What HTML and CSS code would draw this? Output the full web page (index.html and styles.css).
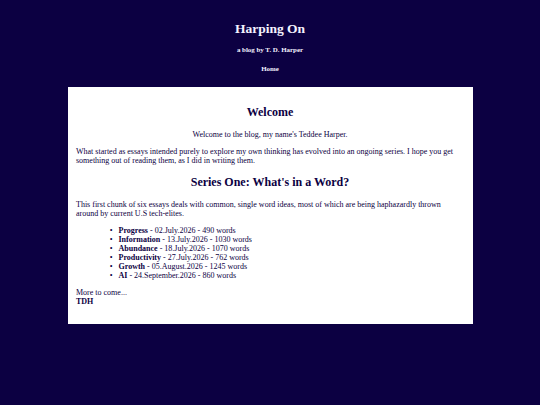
FILE: index.html
```html
<!DOCTYPE html>
<html lang="en">
<head>
<meta charset="utf-8">
<title>Harping On</title>
<link rel="stylesheet" href="styles.css">
</head>
<body>
<header class="site-header">
  <h1 class="site-title">Harping On</h1>
  <h5 class="site-sub">a blog by T. D. Harper</h5>
  <nav class="site-nav"><a href="#" class="nav-link">Home</a></nav>
</header>
<main class="card">
  <h2 class="heading">Welcome</h2>
  <p class="center">Welcome to the blog, my name's Teddee Harper.</p>
  <p>What started as essays intended purely to explore my own thinking has evolved into an ongoing series. I hope you get something out of reading them, as I did in writing them.</p>
  <h2 class="heading">Series One: What's in a Word?</h2>
  <p>This first chunk of six essays deals with common, single word ideas, most of which are being haphazardly thrown around by current U.S tech-elites.</p>
  <ul class="essays">
    <li><b>Progress</b> - 02.July.2026 - 490 words</li>
    <li><b>Information</b> - 13.July.2026 - 1030 words</li>
    <li><b>Abundance</b> - 18.July.2026 - 1070 words</li>
    <li><b>Productivity</b> - 27.July.2026 - 762 words</li>
    <li><b>Growth</b> - 05.August.2026 - 1245 words</li>
    <li><b>AI</b> - 24.September.2026 - 860 words</li>
  </ul>
  <p class="sign">More to come...<br><b>TDH</b></p>
</main>
</body>
</html>
```
FILE: styles.css
```css
html, body {
  margin: 0;
  padding: 0;
}
body {
  background: #0c0042;
  color: #0c0042;
  font-family: "Liberation Serif", "Times New Roman", serif;
  font-size: 8px;
  padding-bottom: 20px;
}
.site-header {
  text-align: center;
  color: #f4f2ff;
  padding-top: 21px;
}
.site-title {
  font-size: 13.5px;
  margin: 0;
  line-height: 16px;
}
.site-sub {
  font-size: 6.9px;
  margin: 9px 0 0;
  line-height: 8px;
}
.site-nav {
  font-size: 6.9px;
  font-weight: bold;
  margin-top: 11px;
  line-height: 8px;
}
.nav-link {
  color: #f4f2ff;
  text-decoration: none;
}
.card {
  display: block;
  width: 75%;
  margin: 14px auto 0;
  background: #ffffff;
  padding: 8px 8.5px 10px;
  box-sizing: border-box;
  overflow: hidden;
}
.heading {
  font-size: 12px;
  text-align: center;
  margin: 10px 0;
}
.card p {
  margin: 8px 0;
}
.center {
  text-align: center;
}
.essays {
  margin: 8px 0;
  padding-left: 42.5px;
  list-style: none;
}
.essays li::before {
  content: "\2022";
  display: inline-block;
  width: 8.7px;
  margin-left: -8.7px;
}
.sign {
  margin-bottom: 8px;
}
```
